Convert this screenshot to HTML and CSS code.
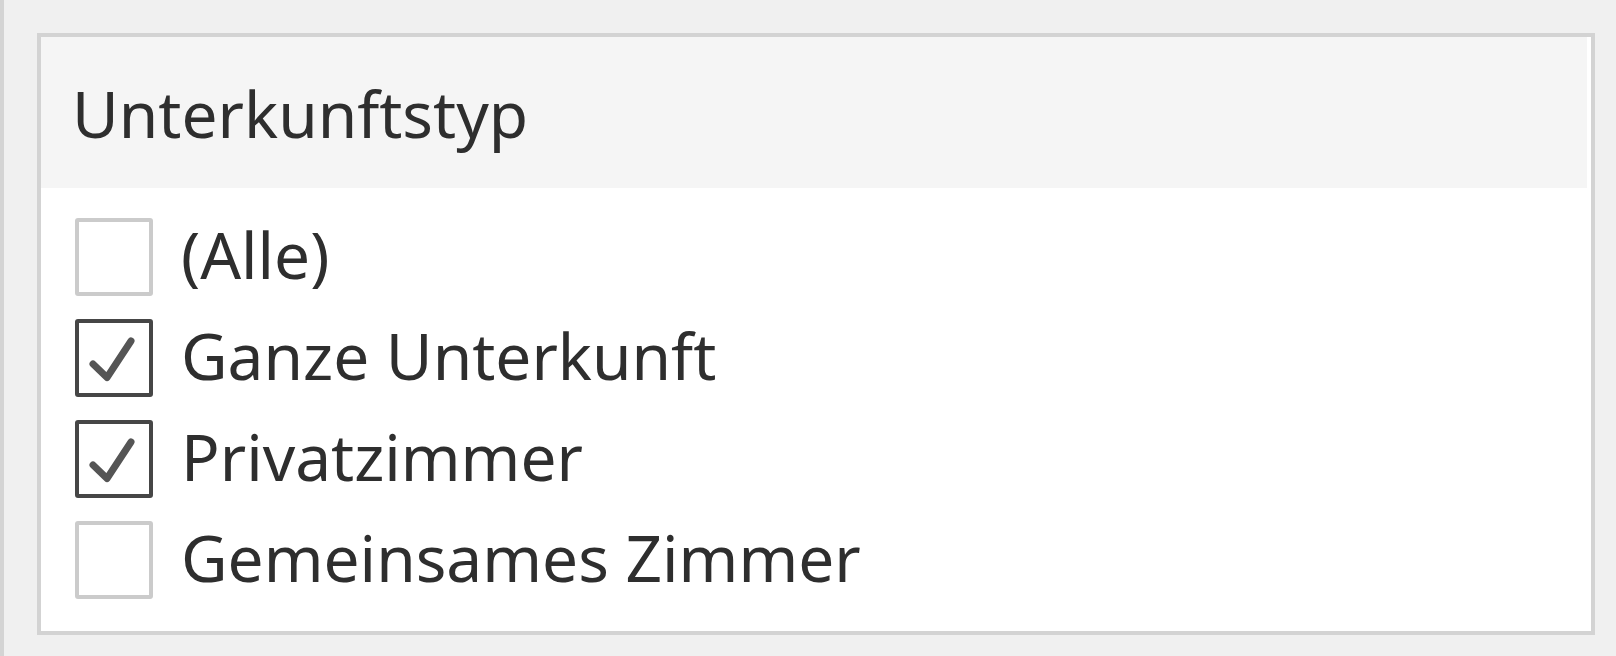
FILE: index.html
```html
<!DOCTYPE html>
<html lang="de">
<head>
  <meta charset="UTF-8">
  <title>Unterkunftstyp</title>
  <link rel="stylesheet" href="styles.css">
</head>
<body>

<div class="edge"></div>

<div class="filter">
  <div class="filter-title">Unterkunftstyp</div>

  <div class="filter-list">
    <label class="option">
      <span class="box"></span>
      <span class="option-text">(Alle)</span>
    </label>
    <label class="option">
      <span class="box checked">
        <svg viewBox="0 0 78 78"><polyline points="18,45 32,58.5 56,22"/></svg>
      </span>
      <span class="option-text">Ganze Unterkunft</span>
    </label>
    <label class="option">
      <span class="box checked">
        <svg viewBox="0 0 78 78"><polyline points="18,45 32,58.5 56,22"/></svg>
      </span>
      <span class="option-text">Privatzimmer</span>
    </label>
    <label class="option">
      <span class="box"></span>
      <span class="option-text">Gemeinsames Zimmer</span>
    </label>
  </div>
</div>

</body>
</html>
```
FILE: styles.css
```css
body {
  margin: 0;
  background-color: #f0f0f0;
  color: #2e2e2e;
  font-family: "Noto Sans", sans-serif;
  display: flex;
  gap: 33px;
  height: 656px;
  overflow: hidden;
}
.edge {
  width: 4px;
  flex-shrink: 0;
  background-color: #d4d4d4;
}
.filter {
  margin-top: 33px;
  width: 1558px;
  height: 602px;
  box-sizing: border-box;
  border: 4px solid #d3d3d3;
  background-color: #fff;
  display: flex;
  flex-direction: column;
}
.filter-title {
  margin-right: 4px;
  padding: 33px 0 31px 31px;
  background-color: #f5f5f5;
  font-size: 64px;
}
.filter-list {
  padding: 18px 0 0 34px;
}
.option {
  display: flex;
  align-items: center;
  gap: 28px;
  height: 101px;
}
.box {
  width: 78px;
  height: 78px;
  box-sizing: border-box;
  border: 4px solid #cbcbcb;
  border-radius: 3px;
  position: relative;
}
.box.checked {
  border-color: #464646;
}
.box svg {
  position: absolute;
  left: -4px;
  top: -4px;
  width: 78px;
  height: 78px;
  fill: none;
  stroke: #555;
  stroke-width: 7;
  stroke-linecap: round;
  stroke-linejoin: round;
}
.option-text {
  font-size: 64px;
  padding-bottom: 4px;
}
```
